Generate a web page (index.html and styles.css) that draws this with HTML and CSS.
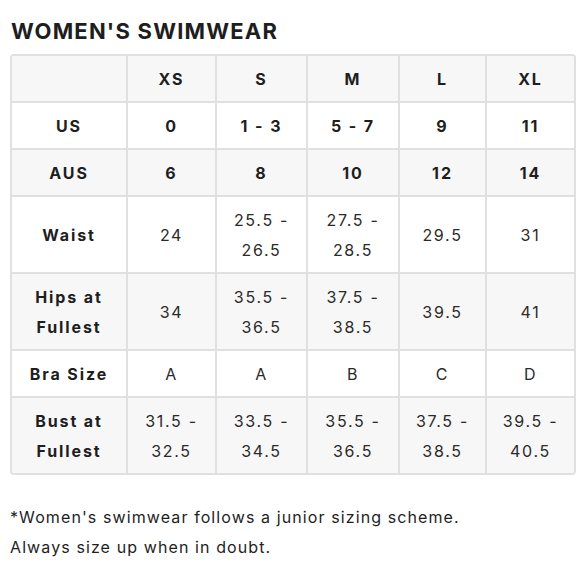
FILE: index.html
```html
<!DOCTYPE html>
<html>
<head>
<meta charset="utf-8">
<link rel="stylesheet" href="styles.css">
</head>
<body>
<div class="page">
  <h1 class="title">WOMEN'S SWIMWEAR</h1>
  <div class="table-wrap">
    <table class="size-table">
      <colgroup>
        <col class="c0"><col class="c1"><col class="c2"><col class="c3"><col class="c4"><col class="c5">
      </colgroup>
      <tr class="alt head">
        <th></th><th>XS</th><th>S</th><th>M</th><th>L</th><th>XL</th>
      </tr>
      <tr class="strong">
        <th>US</th><td>0</td><td>1 - 3</td><td>5 - 7</td><td>9</td><td>11</td>
      </tr>
      <tr class="alt strong">
        <th>AUS</th><td>6</td><td>8</td><td>10</td><td>12</td><td>14</td>
      </tr>
      <tr>
        <th>Waist</th><td>24</td><td>25.5 -<br>26.5</td><td>27.5 -<br>28.5</td><td>29.5</td><td>31</td>
      </tr>
      <tr class="alt">
        <th>Hips at<br>Fullest</th><td>34</td><td>35.5 -<br>36.5</td><td>37.5 -<br>38.5</td><td>39.5</td><td>41</td>
      </tr>
      <tr>
        <th>Bra Size</th><td>A</td><td>A</td><td>B</td><td>C</td><td>D</td>
      </tr>
      <tr class="alt">
        <th>Bust at<br>Fullest</th><td>31.5 -<br>32.5</td><td>33.5 -<br>34.5</td><td>35.5 -<br>36.5</td><td>37.5 -<br>38.5</td><td>39.5 -<br>40.5</td>
      </tr>
    </table>
  </div>
  <p class="note">*Women's swimwear follows a junior sizing scheme.<br>Always size up when in doubt.</p>
</div>
</body>
</html>
```
FILE: styles.css
```css
html, body {
  margin: 0;
  padding: 0;
  background: #ffffff;
}
.page {
  padding: 18px 4px 0 10px;
  font-family: Inter, "Liberation Sans", sans-serif;
  color: #222;
}
.title {
  margin: 0 0 9px 1px;
  font-size: 22px;
  font-weight: 700;
  letter-spacing: 1.2px;
  line-height: 27px;
  color: #1e1e1e;
}
.table-wrap {
  width: 566px;
  border: 2px solid #e0e0e0;
  border-radius: 4px;
  overflow: hidden;
  box-sizing: border-box;
}
.size-table {
  width: 100%;
  border-collapse: collapse;
  table-layout: fixed;
}
.c0 { width: 115px; }
.c1 { width: 89px; }
.c2 { width: 91px; }
.c3 { width: 92px; }
.c4 { width: 87px; }
.c5 { width: auto; }
.size-table th, .size-table td {
  border: 2px solid #e0e0e0;
  padding: 8px 2px 7px;
  text-align: center;
  vertical-align: middle;
  font-size: 16px;
  line-height: 30px;
  letter-spacing: 1.7px;
}
.size-table tr:first-child th { border-top: none; }
.size-table tr:last-child th, .size-table tr:last-child td { border-bottom: none; }
.size-table th:first-child { border-left: none; }
.size-table tr > *:last-child { border-right: none; }
.size-table th {
  font-weight: 700;
  color: #1e1e1e;
  letter-spacing: 1.9px;
}
.size-table td {
  font-weight: 400;
  color: #2a2a2a;
}
.size-table tr.strong td {
  font-weight: 700;
  color: #1e1e1e;
  letter-spacing: 1.9px;
}
.size-table tr.alt {
  background: #f7f7f7;
}
.note {
  margin: 27px 0 0 0;
  font-size: 16px;
  line-height: 30px;
  letter-spacing: 1.1px;
  color: #1e1e1e;
}
```
